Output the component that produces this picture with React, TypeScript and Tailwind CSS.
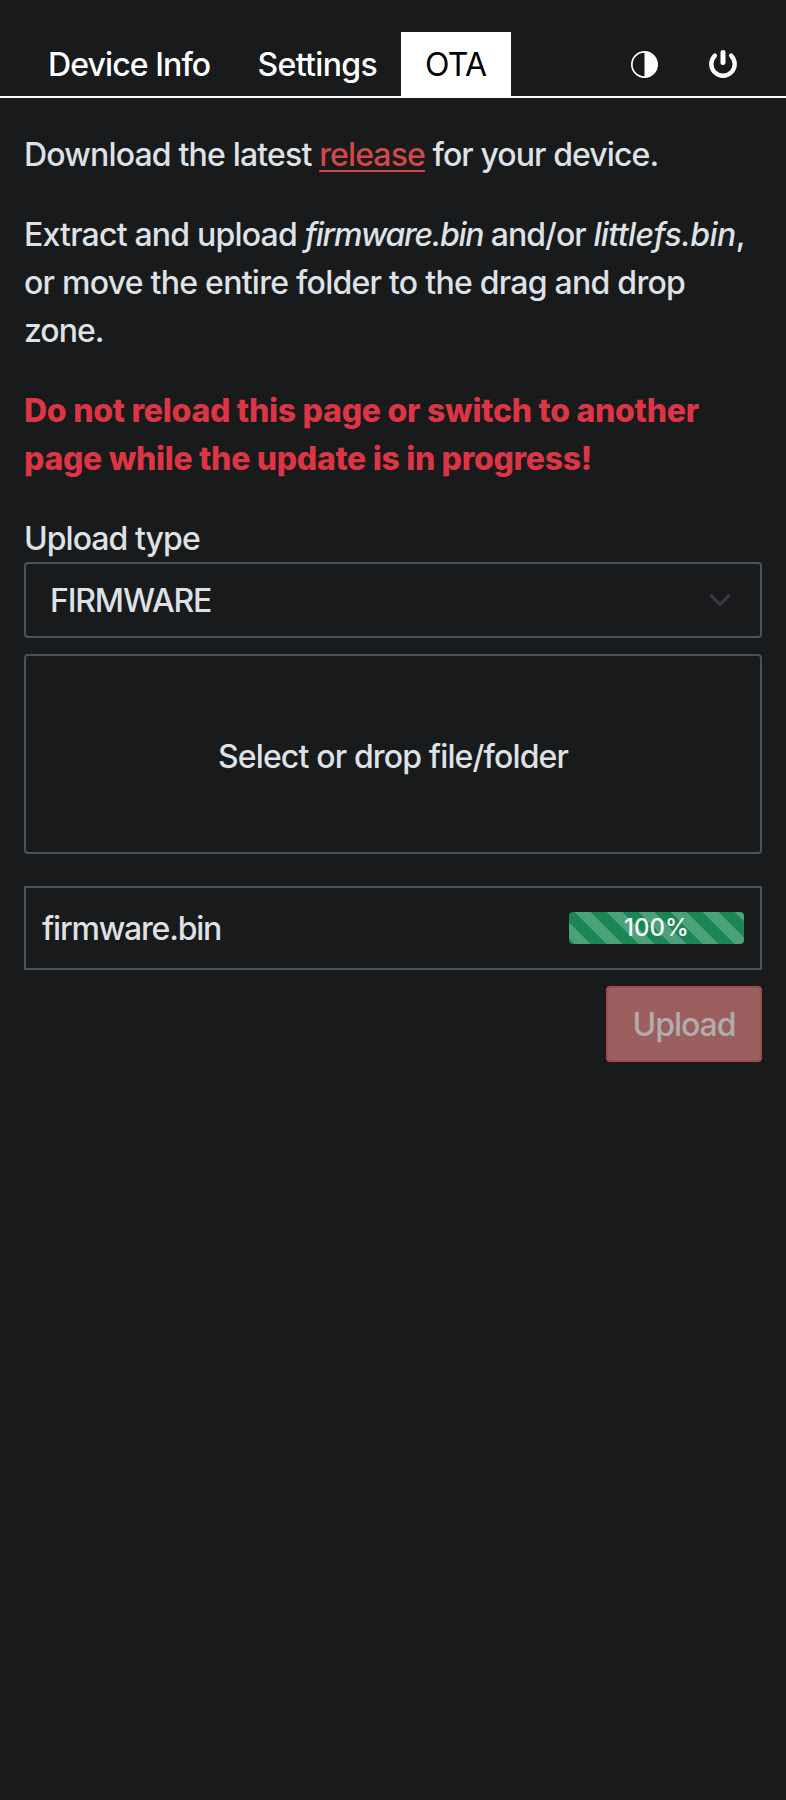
import React from "react";

const text = "font-['Inter',sans-serif] text-[32px] leading-[48px] tracking-[-0.7px]";

function ContrastIcon() {
  return (
    <svg width="27" height="27" viewBox="0 0 16 16" fill="currentColor">
      <path d="M8 15A7 7 0 0 1 8 1zm0 1A8 8 0 1 0 8 0a8 8 0 0 0 0 16" />
    </svg>
  );
}

function PowerIcon() {
  return (
    <svg width="28" height="28" viewBox="0 0 28 28" fill="none" stroke="currentColor" strokeLinecap="round">
      <path d="M5.9 5.6A11.7 11.7 0 1 0 22.1 5.6" strokeWidth="4.4" />
      <path d="M14 2.6V12.4" strokeWidth="5" />
    </svg>
  );
}

function Progress() {
  return (
    <div className="flex h-8 w-[175px] items-center justify-center rounded-[4px] bg-[#198754] bg-[linear-gradient(45deg,rgba(255,255,255,.22)_25%,transparent_25%,transparent_50%,rgba(255,255,255,.22)_50%,rgba(255,255,255,.22)_75%,transparent_75%,transparent)] bg-[length:32px_32px] bg-[position:5px_0px] text-2xl font-medium tracking-[0px] text-white">
      <span>100%</span>
    </div>
  );
}

export default function App() {
  return (
    <main className={`h-[1800px] w-full bg-[#181a1b] text-[#dee2e6] ${text}`}>
      <nav className="flex h-[98px] items-end border-b-2 border-white px-6 text-white">
        <a className="h-16 w-[209.5px] px-6 pt-[9px] font-[450] tracking-[-0.9px] whitespace-nowrap">Device Info</a>
        <a className="h-16 w-[167.5px] px-6 pt-[9px] font-[450] tracking-[-0.65px] whitespace-nowrap">Settings</a>
        <a className="h-16 w-[110px] bg-white px-6 pt-[9px] tracking-[-0.7px] whitespace-nowrap text-black">OTA</a>
        <div className="ml-auto flex h-16 items-center gap-[51px] pr-[25px]">
          <ContrastIcon />
          <PowerIcon />
        </div>
      </nav>
      <section className="px-6 pt-[33px] font-[450]">
        <p className="mb-8 tracking-[-0.9px] whitespace-nowrap">
          <span className="tracking-[-0.82px]">Download the latest </span>
          <a className="text-[#d04848] underline decoration-2 underline-offset-[4px]">release</a> for your device.
        </p>
        <p className="mb-8 whitespace-nowrap">
          <span className="tracking-[-0.8px]">Extract and upload <i className="font-medium tracking-[-1.35px]">firmware.bin</i><span className="tracking-[-0.95px]"> and/or </span><i className="font-medium tracking-[-0.6px] [font-feature-settings:'calt'_0]">littlefs.bin</i>,</span><br />
          <span className="tracking-[-0.74px]">or move the entire folder to the drag and drop</span><br />
          <span className="tracking-[-1px]">zone.</span>
        </p>
        <p className="mb-8 font-extrabold tracking-[-0.26px] whitespace-nowrap text-[#dc3545]">
          Do not reload this page or switch to another<br />
          <span className="tracking-[-0.31px]">page while the update is in progress!</span>
        </p>
        <label className="-mb-px block tracking-[-0.95px]">Upload type</label>
        <div className="mb-4 flex h-[76px] items-center justify-between rounded-[4px] border-2 border-[#485259] pr-7 pl-6">
          <span className="pt-0.5 tracking-[-1.15px]">FIRMWARE</span>
          <svg width="24" height="24" viewBox="0 0 16 16" fill="none" stroke="#3b3c42" strokeWidth="2" strokeLinecap="round" strokeLinejoin="round">
            <path d="m2 5 6 6 6-6" />
          </svg>
        </div>
        <div className="mb-8 flex h-[200px] items-center justify-center rounded-[4px] border-2 border-[#485259]">
          <span className="pt-[5px] tracking-[-0.85px]">Select or drop file/folder</span>
        </div>
        <div className="mb-4 flex h-[84px] items-center justify-between border-2 border-[#485259] px-4">
          <span className="pt-0.5 tracking-[-1.2px]">firmware.bin</span>
          <Progress />
        </div>
        <button className="ml-auto flex h-[76px] w-[156px] items-center justify-center rounded-[4px] border-2 border-[#9c4d50] bg-[#9b5f60] pt-0.5 tracking-[-1.05px] text-[#b1adad]">
          Upload
        </button>
      </section>
    </main>
  );
}
